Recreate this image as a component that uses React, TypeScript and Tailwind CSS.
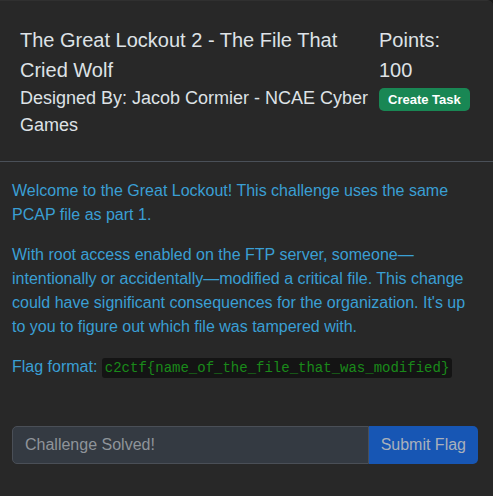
export default function App() {
  return (
    <div className="min-h-[496px] w-[493px] bg-[#1b1b1b] font-['Liberation_Sans',Arial,sans-serif]">
      <div className="min-h-[496px] rounded-tr-[6px] border-t border-[#303030] bg-[#282828]">
        {/* Header */}
        <div className="flex border-b border-[#4a5058] px-5 pt-6 pb-[22px]">
          <div className="w-[359px] shrink-0">
            <h4 className="text-[20px] leading-[30px] text-[#dee2e6]">
              The Great Lockout 2 - The File That Cried Wolf
            </h4>
            <div className="text-[18px] leading-[27px] text-[#dee2e6]">
              Designed By: Jacob Cormier - NCAE Cyber Games
            </div>
          </div>
          <div className="flex flex-col items-start">
            <div className="text-[20px] leading-[30px] text-[#dee2e6]">Points:</div>
            <div className="text-[20px] leading-[30px] text-[#dee2e6]">100</div>
            <button className="mt-[3px] whitespace-nowrap rounded-[5px] bg-[#198754] px-[9px] py-[3px] text-[13px] leading-[17px] font-bold text-white">
              Create Task
            </button>
          </div>
        </div>

        {/* Body */}
        <div className="pl-3 pr-[15px] pt-[17px] text-[16px] leading-[24px] text-[#3a9fd4]">
          <p className="mb-4">
            Welcome to the Great Lockout! This challenge uses the same PCAP file as part 1.
          </p>
          <p className="mb-4">
            With root access enabled on the FTP server, someone—intentionally or accidentally—modified a
            critical file. This change could have significant consequences for the organization. It's up
            to you to figure out which file was tampered with.
          </p>
          <p>
            Flag format:{" "}
            <code className="rounded-[3px] bg-[#141414] px-[3px] py-[2px] font-['Liberation_Mono',monospace] text-[14px] text-[#1a8a1a]">
              c2ctf{"{"}name_of_the_file_that_was_modified{"}"}
            </code>
          </p>

          {/* Input group */}
          <div className="mt-[46px] flex h-[38px]">
            <input
              disabled
              placeholder="Challenge Solved!"
              className="h-full min-w-0 flex-1 rounded-l-[5px] border border-[#4a4f57] bg-[#343a42] px-3 text-[16px] text-[#8f949a] placeholder:text-[#8f949a] outline-none"
            />
            <button className="h-full rounded-r-[5px] bg-[#1756b4] px-3 text-[16px] text-[#a9b1bb]">
              Submit Flag
            </button>
          </div>
        </div>
      </div>
    </div>
  );
}
